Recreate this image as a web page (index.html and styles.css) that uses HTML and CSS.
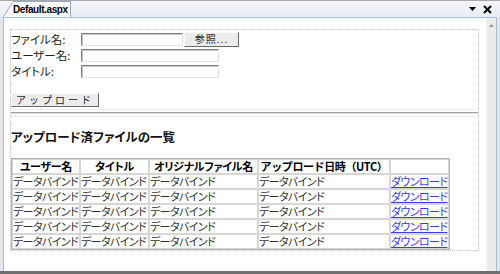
FILE: index.html
```html
<!DOCTYPE html>
<html lang="ja">
<head>
    <meta charset="UTF-8">
    <meta name="viewport" content="width=device-width, initial-scale=1.0">
    <title>Default.aspx</title>
    <link rel="stylesheet" href="styles.css">
</head>
<body>
    <div class="ide">
        <!-- ドキュメントタブ -->
        <div class="tabbar">
            <div class="tab">
                <svg class="tab-edge" width="10" height="16" viewBox="0 0 10 16">
                    <path d="M0 16 L9 2 L10 1 L10 16 Z" fill="#fff"/>
                    <path d="M0.5 16 L9.5 1.5" stroke="#9aaac2" fill="none"/>
                </svg>
                <span class="tab-label">Default.aspx</span>
            </div>
            <div class="tab-tools">
                <svg width="7" height="4" viewBox="0 0 7 4"><path d="M0 0 H7 L3.5 4 Z" fill="#000"/></svg>
                <svg width="9" height="9" viewBox="0 0 9 9"><path d="M1 1 L8 8 M8 1 L1 8" stroke="#000" stroke-width="2"/></svg>
            </div>
        </div>

        <!-- デザイナー -->
        <div class="frame">
            <div class="designer">
                <form class="page">
                    <div class="fields">
                        <label>ファイル名:</label>
                        <div class="file-row">
                            <input class="textbox tb-file" type="text">
                            <button type="button" class="btn browse">参照...</button>
                        </div>
                        <label>ユーザー名:</label>
                        <input class="textbox" type="text">
                        <label>タイトル:</label>
                        <input class="textbox" type="text">
                    </div>
                    <button type="button" class="btn upload">アップロード</button>
                    <div class="rule"><hr></div>

                    <h3>アップロード済ファイルの一覧</h3>
                    <table class="files">
                        <thead>
                            <tr>
                                <th class="c-user">ユーザー名</th>
                                <th class="c-title">タイトル</th>
                                <th class="c-orig">オリジナルファイル名</th>
                                <th class="c-date">アップロード日時（UTC）</th>
                                <th class="c-link"></th>
                            </tr>
                        </thead>
                        <tbody>
                            <tr><td>データバインド</td><td>データバインド</td><td>データバインド</td><td>データバインド</td><td><a href="#">ダウンロード</a></td></tr>
                            <tr><td>データバインド</td><td>データバインド</td><td>データバインド</td><td>データバインド</td><td><a href="#">ダウンロード</a></td></tr>
                            <tr><td>データバインド</td><td>データバインド</td><td>データバインド</td><td>データバインド</td><td><a href="#">ダウンロード</a></td></tr>
                            <tr><td>データバインド</td><td>データバインド</td><td>データバインド</td><td>データバインド</td><td><a href="#">ダウンロード</a></td></tr>
                            <tr><td>データバインド</td><td>データバインド</td><td>データバインド</td><td>データバインド</td><td><a href="#">ダウンロード</a></td></tr>
                        </tbody>
                    </table>
                </form>
            </div>
            <div class="vscroll">
                <svg width="5" height="3" viewBox="0 0 5 3"><path d="M0 3 H5 L2.5 0 Z" fill="#9a9a9a"/></svg>
            </div>
        </div>
    </div>
</body>
</html>
```

FILE: styles.css
```css
body {
    margin: 0;
    font-family: "Noto Sans CJK JP", sans-serif;
    font-feature-settings: "palt";
    color: #222;
}
.ide {
    width: 500px;
    height: 274px;
    box-sizing: border-box;
    background: #e3e6ec;
    border-bottom: 3px solid #6e6e6e;
    display: flex;
    flex-direction: column;
}
.tabbar {
    height: 17px;
    box-sizing: border-box;
    border-top: 1px solid #a8a8a8;
    background: linear-gradient(#f5f6fb, #e9ecf6);
    display: flex;
    align-items: flex-end;
    padding-left: 3px;
}
.tab {
    display: flex;
    height: 16px;
}
.tab-label {
    background: #fff;
    border-top: 1px solid #9aaac2;
    border-right: 1px solid #9aaac2;
    font: bold 10px "Liberation Sans", Arial, sans-serif;
    letter-spacing: -0.4px;
    line-height: 15px;
    padding: 0 2px 0 0;
    color: #000;
}
.tab-tools {
    margin-left: auto;
    display: flex;
    align-items: center;
    gap: 7px;
    height: 16px;
    padding-right: 8px;
}
.frame {
    flex: 1;
    min-height: 0;
    margin: 0 3px;
    border: 1px solid #a3c2dc;
    border-bottom: none;
    background: #fff;
    display: flex;
}
.designer {
    flex: 1;
    padding: 11px 7px 0 6px;
}
.vscroll {
    width: 10px;
    background: #ebebeb;
    border-left: 1px solid #f7f7f7;
    display: flex;
    justify-content: center;
    align-items: flex-start;
    padding-top: 6px;
    box-sizing: border-box;
}
.page {
    border: 1px dotted #c4c4c4;
    margin: 0;
}
.fields {
    display: grid;
    grid-template-columns: 70px auto;
    grid-auto-rows: 16px;
    align-items: center;
    padding-top: 1px;
}
.fields label {
    font-size: 11.5px;
    line-height: 16px;
}
.file-row {
    display: flex;
    align-items: center;
}
.textbox {
    justify-self: start;
    width: 138px;
    height: 13px;
    box-sizing: border-box;
    margin: 0;
    padding: 0;
    border: 1px solid;
    border-color: #7c7c7c #e2e2e2 #e2e2e2 #7c7c7c;
    box-shadow: inset 1px 1px 0 #c8c8c8;
    background: #fff;
}
.tb-file {
    width: 102px;
}
.btn {
    background: #ececec;
    border: 1px solid;
    border-color: #fbfbfb #6a6a6a #6a6a6a #fbfbfb;
    font-family: "Noto Sans CJK JP", sans-serif;
    font-size: 10px;
    line-height: 12px;
    padding: 0;
    color: #222;
    box-sizing: border-box;
}
.browse {
    width: 55px;
    height: 15px;
    margin-left: 1px;
    letter-spacing: 1px;
}
.upload {
    display: block;
    width: 88px;
    height: 14px;
    margin-top: 14px;
    letter-spacing: 3px;
}
.rule {
    margin-top: 2px;
    height: 6px;
    border-top: 1px solid #ececec;
    border-bottom: 1px solid #ececec;
}
.rule hr {
    margin: 2px 0 0;
    border: 0;
    border-top: 1px solid #a0a0a0;
    border-bottom: 1px solid #e2e2e2;
}
h3 {
    margin: 12px 0 13px;
    font-size: 12.5px;
    line-height: 16px;
    color: #111;
}
.files {
    table-layout: fixed;
    width: 439px;
    border-collapse: separate;
    border-spacing: 0;
    border: 1px solid #b4b4b4;
}
.files th, .files td {
    box-sizing: border-box;
    border: 1px solid #d6d6d6;
    padding: 0;
    font-size: 11px;
    line-height: 13px;
    white-space: nowrap;
    overflow: hidden;
}
.files th {
    color: #000;
    font-weight: bold;
    letter-spacing: -0.3px;
}
.files th.c-date {
    font-feature-settings: normal;
    letter-spacing: -0.4px;
}
.files td {
    color: #333;
    text-align: left;
    letter-spacing: -0.6px;
}
.c-user { width: 68px; }
.c-title { width: 69px; }
.c-orig { width: 109px; }
.c-date { width: 132px; }
.c-link { width: 59px; }
.files a {
    color: #3a3aff;
    text-decoration: underline;
}
```
